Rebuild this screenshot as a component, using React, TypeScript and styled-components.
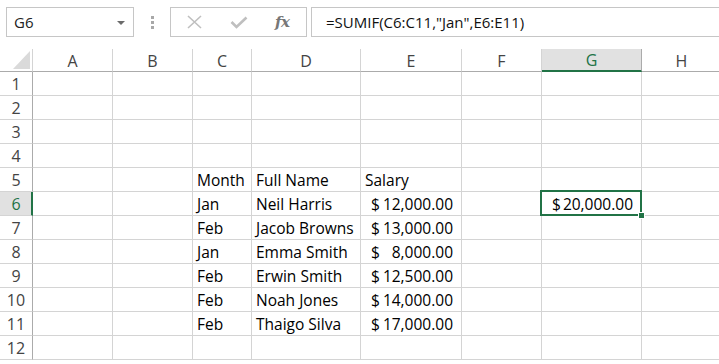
import React from "react";
import styled, { createGlobalStyle, css } from "styled-components";

const GlobalStyle = createGlobalStyle`
  body {
    margin: 0;
    background: #ffffff;
    font-family: "Open Sans", "Noto Sans", sans-serif;
    overflow: hidden;
  }
`;

const GREEN = "#217346";
const GRID = "#d4d4d4";
const HEAD_LINE = "#ababab";

const colWidths = [33, 80, 80, 59, 109, 101, 80, 100, 80, 80];
const letters = ["A", "B", "C", "D", "E", "F", "G", "H", ""];

type Row = { month?: string; name?: string; salary?: string; g?: string };

const rows: Row[] = [
  {},
  {},
  {},
  {},
  { month: "Month", name: "Full Name", salary: "Salary" },
  { month: "Jan", name: "Neil Harris", salary: "12,000.00", g: "20,000.00" },
  { month: "Feb", name: "Jacob Browns", salary: "13,000.00" },
  { month: "Jan", name: "Emma Smith", salary: "8,000.00" },
  { month: "Feb", name: "Erwin Smith", salary: "12,500.00" },
  { month: "Feb", name: "Noah Jones", salary: "14,000.00" },
  { month: "Feb", name: "Thaigo Silva", salary: "17,000.00" },
  {},
];

const App = () => {
  return (
    <Page>
      <GlobalStyle />
      <Toolbar>
        <NameBox>
          <span>G6</span>
          <Caret />
        </NameBox>
        <Grip>
          <i />
          <i />
          <i />
        </Grip>
        <Buttons>
          <IconBtn $w={16}>
            <svg width="15" height="14" viewBox="0 0 15 14">
              <path d="M1 1 L14 13 M14 1 L1 13" stroke="#bfbfbf" strokeWidth="1.6" fill="none" />
            </svg>
          </IconBtn>
          <IconBtn $w={18} $ml={28}>
            <svg width="18" height="13" viewBox="0 0 18 13">
              <path d="M1.5 6 L6.5 11 L16.5 1.5" stroke="#bfbfbf" strokeWidth="2.6" fill="none" />
            </svg>
          </IconBtn>
          <Fx>fx</Fx>
        </Buttons>
        <Formula>=SUMIF(C6:C11,"Jan",E6:E11)</Formula>
      </Toolbar>

      <Sheet>
        <Corner>
          <svg width="17" height="18" viewBox="0 0 17 18">
            <path d="M17 0 L17 18 L0 18 Z" fill="#dadada" />
          </svg>
        </Corner>
        {letters.map((l, i) => (
          <ColHead key={i} $active={l === "G"}>
            {l}
          </ColHead>
        ))}
        {rows.map((r, i) => {
          const n = i + 1;
          return (
            <React.Fragment key={n}>
              <RowHead $active={n === 6}>{n}</RowHead>
              <Cell />
              <Cell />
              <Cell>{r.month}</Cell>
              <Cell>{r.name}</Cell>
              {r.salary && n > 5 ? (
                <Money>
                  <span>$</span>
                  <span>{r.salary}</span>
                </Money>
              ) : (
                <Cell>{r.salary}</Cell>
              )}
              <Cell />
              {r.g ? (
                <Money $selected>
                  <span>$</span>
                  <span>{r.g}</span>
                  <Handle />
                </Money>
              ) : (
                <Cell />
              )}
              <Cell />
              <Cell />
            </React.Fragment>
          );
        })}
      </Sheet>
    </Page>
  );
};

export default App;

const Page = styled.div`
  width: 719px;
  height: 364px;
  display: flex;
  flex-direction: column;
  overflow: hidden;
`;

const Toolbar = styled.div`
  height: 49px;
  box-sizing: border-box;
  padding: 7px 0 0 6px;
  display: flex;
  align-items: flex-start;
  color: #333;
`;

const boxCss = css`
  height: 30px;
  box-sizing: border-box;
  border: 1px solid #c6c6c6;
  background: #fff;
  display: flex;
  align-items: center;
  flex-shrink: 0;
`;

const NameBox = styled.div`
  ${boxCss};
  width: 128px;
  padding: 0 8px 0 7px;
  justify-content: space-between;
  font-size: 15px;
  color: #222;
`;

const Caret = styled.div`
  width: 0;
  height: 0;
  border-left: 4px solid transparent;
  border-right: 4px solid transparent;
  border-top: 4px solid #6b6b6b;
  margin-top: 1px;
`;

const Grip = styled.div`
  width: 36px;
  height: 30px;
  flex-shrink: 0;
  display: flex;
  flex-direction: column;
  align-items: center;
  justify-content: center;
  gap: 2px;
  i {
    width: 3px;
    height: 3px;
    background: #a8a8a8;
  }
`;

const Buttons = styled.div`
  ${boxCss};
  width: 137px;
  padding: 0 0 0 15px;
`;

const IconBtn = styled.div<{ $w: number; $ml?: number }>`
  width: ${(p) => p.$w}px;
  margin-left: ${(p) => p.$ml ?? 0}px;
  display: flex;
  justify-content: center;
`;

const Fx = styled.div`
  font-family: "DejaVu Serif", "Liberation Serif", serif;
  font-style: italic;
  font-weight: bold;
  font-size: 15px;
  color: #777;
  margin-left: 27px;
  letter-spacing: -0.5px;
`;

const Formula = styled.div`
  ${boxCss};
  flex: 1 0 auto;
  margin-left: 4px;
  border-right: none;
  padding-left: 14px;
  font-size: 15px;
  color: #111;
`;

const Sheet = styled.div`
  display: grid;
  grid-template-columns: ${colWidths.map((w) => `${w}px`).join(" ")};
  grid-template-rows: 23px repeat(12, 24px);
`;

const Corner = styled.div`
  box-sizing: border-box;
  border-right: 1px solid ${GRID};
  border-bottom: 1px solid ${HEAD_LINE};
  display: flex;
  align-items: flex-end;
  justify-content: flex-end;
  padding: 0 2px 2px 0;
`;

const ColHead = styled.div<{ $active?: boolean }>`
  box-sizing: border-box;
  border-right: 1px solid ${(p) => (p.$active ? HEAD_LINE : GRID)};
  border-bottom: ${(p) => (p.$active ? `2px solid ${GREEN}` : `1px solid ${HEAD_LINE}`)};
  background: ${(p) => (p.$active ? "#e1e1e1" : "#fff")};
  color: ${(p) => (p.$active ? GREEN : "#444")};
  font-size: 16px;
  display: flex;
  align-items: center;
  justify-content: center;
  padding-top: 1px;
`;

const RowHead = styled.div<{ $active?: boolean }>`
  box-sizing: border-box;
  border-right: ${(p) => (p.$active ? `2px solid ${GREEN}` : `1px solid ${HEAD_LINE}`)};
  border-bottom: 1px solid ${GRID};
  background: ${(p) => (p.$active ? "#e1e1e1" : "#fff")};
  color: ${(p) => (p.$active ? GREEN : "#444")};
  font-size: 16px;
  display: flex;
  align-items: center;
  justify-content: center;
  padding-left: ${(p) => (p.$active ? "1px" : "0")};
`;

const Cell = styled.div`
  box-sizing: border-box;
  border-right: 1px solid ${GRID};
  border-bottom: 1px solid ${GRID};
  font-size: 15.5px;
  color: #000;
  display: flex;
  align-items: flex-end;
  padding: 0 0 0 4px;
  white-space: nowrap;
  overflow: visible;
`;

const Money = styled(Cell)<{ $selected?: boolean }>`
  justify-content: space-between;
  padding: 0 8px 0 10px;
  position: relative;
  ${(p) =>
    p.$selected &&
    css`
      &::after {
        content: "";
        position: absolute;
        left: -2px;
        top: -2px;
        right: -1px;
        bottom: -1px;
        border: 2px solid ${GREEN};
        pointer-events: none;
      }
    `}
`;

const Handle = styled.div`
  position: absolute;
  right: -4px;
  bottom: -4px;
  width: 5px;
  height: 5px;
  background: ${GREEN};
  border: 1px solid #fff;
  z-index: 1;
`;
